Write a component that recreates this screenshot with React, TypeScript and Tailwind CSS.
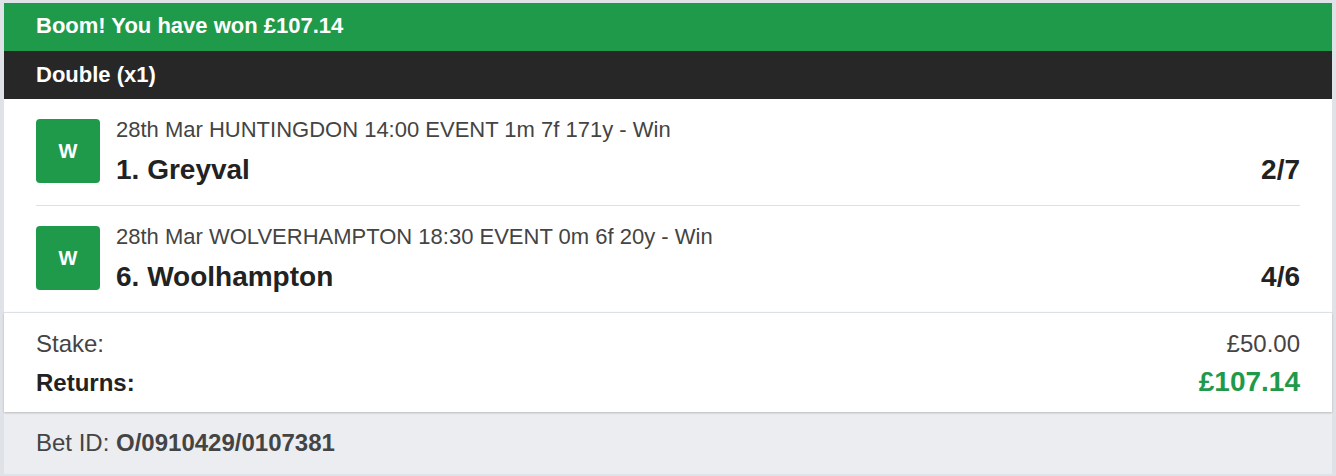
import React from "react";

const legs = [
  { info: "28th Mar HUNTINGDON 14:00 EVENT 1m 7f 171y - Win", name: "1. Greyval", odds: "2/7" },
  { info: "28th Mar WOLVERHAMPTON 18:30 EVENT 0m 6f 20y - Win", name: "6. Woolhampton", odds: "4/6" },
];

export default function App() {
  return (
    <div
      className="w-[1336px] h-[476px] bg-[#dfe3e8] pt-[3px] px-[4px] pb-[2px]"
      style={{ fontFamily: '"Liberation Sans", Arial, sans-serif' }}
    >
      <div className="flex flex-col h-full bg-white">
        <div className="h-[48px] bg-[#1f9a4b] flex items-center pl-8 pb-[2px] text-white font-bold text-[22px] leading-[24px]">
          Boom! You have won £107.14
        </div>
        <div className="h-[48px] bg-[#272727] flex items-center pl-8 text-white font-bold text-[22px] leading-[24px]">
          Double (x1)
        </div>
        <div className="px-8">
          {legs.map((leg, i) => (
            <div
              key={i}
              className={`flex items-start pt-5 pb-5 ${i === 0 ? "border-b border-[#dde1e5]" : ""}`}
            >
              <div className="w-16 h-16 shrink-0 rounded-[4px] bg-[#1f9a4b] flex items-center justify-center text-white font-bold text-[20px]">
                W
              </div>
              <div className="flex-1 pl-4">
                <div className="text-[22px] leading-[22px] text-[#444]">{leg.info}</div>
                <div className="mt-[13px] flex justify-between items-baseline text-[28px] leading-[31px] font-bold text-[#222]">
                  <span>{leg.name}</span>
                  <span>{leg.odds}</span>
                </div>
              </div>
            </div>
          ))}
        </div>
        <div className="relative z-10 border-t border-[#dde1e5] bg-white px-8 pt-[17px] pb-[14px] shadow-[0_1px_2px_rgba(0,0,0,0.22)]">
          <div className="flex justify-between items-baseline text-[24px] leading-[28px] text-[#444]">
            <span>Stake:</span>
            <span>£50.00</span>
          </div>
          <div className="mt-2 flex justify-between items-baseline">
            <span className="text-[24px] leading-[28px] font-bold text-[#222]">Returns:</span>
            <span className="text-[28px] leading-[32px] font-bold text-[#1f9a4b]">£107.14</span>
          </div>
        </div>
        <div className="flex-1 bg-[#ebedf0] flex items-center px-8 text-[24px] leading-[28px] text-[#444]">
          <span>
            Bet ID: <span className="font-bold">O/0910429/0107381</span>
          </span>
        </div>
      </div>
    </div>
  );
}
